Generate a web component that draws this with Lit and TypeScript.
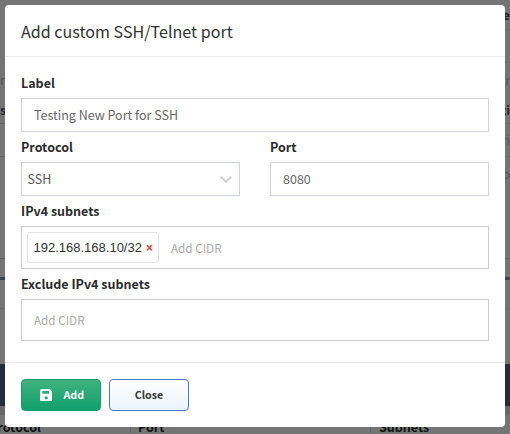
import { LitElement, html, css } from "lit";
import { customElement } from "lit/decorators.js";

@customElement("app-root")
export class AppRoot extends LitElement {
  static styles = css`
    :host { display: block; width: 510px; height: 434px; position: relative; overflow: hidden; background: #757575;
      font-family: "Noto Sans CJK JP", "Source Sans Pro", "Open Sans", sans-serif; color: #212529; }
    * { box-sizing: border-box; }
    .page { display: flex; flex-direction: column; height: 434px; font-size: 12.5px; line-height: 16px; }
    .r { display: flex; justify-content: space-between; align-items: center; border-bottom: 1px solid #666; overflow: hidden; flex: none; white-space: nowrap; }
    .plain { border-bottom-color: transparent; }
    .r1 { height: 30px; align-items: flex-start; padding-top: 7px; justify-content: flex-end; border-image: linear-gradient(90deg, transparent 500px, #666 500px) 1; font-weight: 700; color: #222; }
    .r2 { height: 33px; border-image: linear-gradient(90deg, transparent 500px, #666 500px) 1; }
    .r3 { height: 61px; flex-direction: column; align-items: stretch; justify-content: flex-start; padding-top: 9px; gap: 14px; }
    .r4 { height: 33px; justify-content: flex-end; }
    .r5 { height: 102px; justify-content: flex-end; align-items: flex-start; padding-top: 9px; border-bottom-color: #5f5f5f; }
    .r6 { height: 21px; border-bottom: 3px solid #3b4252; }
    .r7 { height: 29px; border-bottom-color: #6a6a6a; }
    .r8 { height: 55px; }
    .line { display: flex; justify-content: space-between; }
    .faint { color: #4a5662; }
    .strong { font-weight: 700; color: #1f2a36; }
    .band { height: 42px; background: #252d3d; flex: none; }
    .strip { height: 9px; background: #696969; flex: none; }
    .thead { flex: 1; display: grid; grid-template-columns: 130px 240px 140px; font-weight: 700; color: #111; overflow: hidden; line-height: 16px; }
    .thead > div { padding-top: 4px; white-space: nowrap; border-left: 1px solid #666; }
    .thead > div:first-child { border-left: 0; margin-left: -11px; }
    .thead > div:nth-child(2) { padding-left: 7px; }
    .thead > div:nth-child(3) { padding-left: 8px; }
    .modal { position: absolute; left: 5px; top: 5px; width: 500px; height: 422px; background: #fff; border-radius: 4px; display: flex; flex-direction: column; }
    .head { height: 52px; padding: 0 16px; display: flex; align-items: center; font-size: 16.1px; line-height: 24px; color: #333; border-bottom: 1px solid #e9ecef; flex: none; }
    .body { flex: 1; padding: 16px 16px 0; display: flex; flex-direction: column; }
    label { display: block; font-size: 12.5px; font-weight: 700; line-height: 20px; color: #2b2b2b; margin-bottom: 5px; }
    .sp { margin-top: 5px; }
    .input { height: 34px; border: 1px solid #d1d5db; display: flex; align-items: center; padding: 0 12px; font-size: 12.5px; line-height: 20px; color: #666; background: #fff; }
    .row { display: grid; grid-template-columns: 219px 219px; gap: 30px; }
    .select { padding: 0 5.5px; justify-content: space-between; color: #555; }
    .select svg { margin-right: 2px; }
    .tags { border: 1px solid #ccc; height: 43px; display: flex; align-items: center; padding: 0 5px; }
    .excl { border: 1px solid #ccc; height: 42px; display: flex; align-items: center; padding: 0 12px; }
    .tag { height: 31px; width: 132px; border: 1px solid #e3e3e3; border-radius: 3px; padding: 0 5.5px; display: flex; align-items: center; gap: 4px; font-family: "Liberation Sans", Arial, sans-serif; font-size: 13px; color: #333; white-space: nowrap; }
    .x { color: #e04040; font-weight: 700; font-size: 12px; line-height: 14px; }
    .ph { font-size: 11.7px; color: #aaa; line-height: 20px; }
    .tags .ph { margin-left: 12px; }
    .foot { height: 65px; border-top: 1px solid #e9ecef; padding: 16px 16px 0; display: flex; gap: 8px; flex: none; align-items: flex-start; }
    .btn { width: 80px; height: 32px; border-radius: 4px; display: flex; align-items: center; justify-content: center; font-size: 10.7px; font-weight: 700; }
    .add { background: linear-gradient(#3fb27f, #11a06c); color: #fff; gap: 11px; border: 1px solid #1a9c6c; padding-left: 2px; }
    .close { background: linear-gradient(#fff, #eaf3fd); color: #333; border: 1px solid #4a7fc0; }
  `;
  render() {
    return html`<div class="page">
      <div class="r r1"><span>e</span></div>
      <div class="r r2"></div>
      <div class="r r3">
        <div class="line faint"><span>r</span><span>tr</span></div>
        <div class="line strong"><span>s</span><span>ti</span></div>
      </div>
      <div class="r r4 faint"><span>ri</span></div>
      <div class="r r5 faint"><span>o</span></div>
      <div class="r r6"></div>
      <div class="r r7"></div>
      <div class="r r8 plain"></div>
      <div class="band"></div>
      <div class="strip"></div>
      <div class="thead"><div>Protocol</div><div>Port</div><div>Subnets</div></div>
      <div class="modal">
        <div class="head">Add custom SSH/Telnet port</div>
        <div class="body">
          <label>Label</label>
          <div class="input">Testing New Port for SSH</div>
          <div class="row sp">
            <div><label>Protocol</label><div class="input select">SSH
              <svg width="12" height="7" viewBox="0 0 12 7"><path d="M.7.7 6 5.8 11.3.7" fill="none" stroke="#ccc" stroke-width="1.8"/></svg></div></div>
            <div><label>Port</label><div class="input">8080</div></div>
          </div>
          <label class="sp">IPv4 subnets</label>
          <div class="tags"><span class="tag">192.168.168.10/32<span class="x">×</span></span><span class="ph">Add CIDR</span></div>
          <label class="sp">Exclude IPv4 subnets</label>
          <div class="excl"><span class="ph">Add CIDR</span></div>
        </div>
        <div class="foot">
          <div class="btn add"><svg width="12.5" height="12.5" viewBox="0 0 13 13"><path fill="#fff" fill-rule="evenodd" d="M2 0h8l3 3v8a2 2 0 0 1-2 2H2a2 2 0 0 1-2-2V2a2 2 0 0 1 2-2zM2.5 2v3h7V2zM6.5 7.5a1.7 1.7 0 1 0 0 3.4 1.7 1.7 0 0 0 0-3.4z"/></svg><span>Add</span></div>
          <div class="btn close">Close</div>
        </div>
      </div>
    </div>`;
  }
}
